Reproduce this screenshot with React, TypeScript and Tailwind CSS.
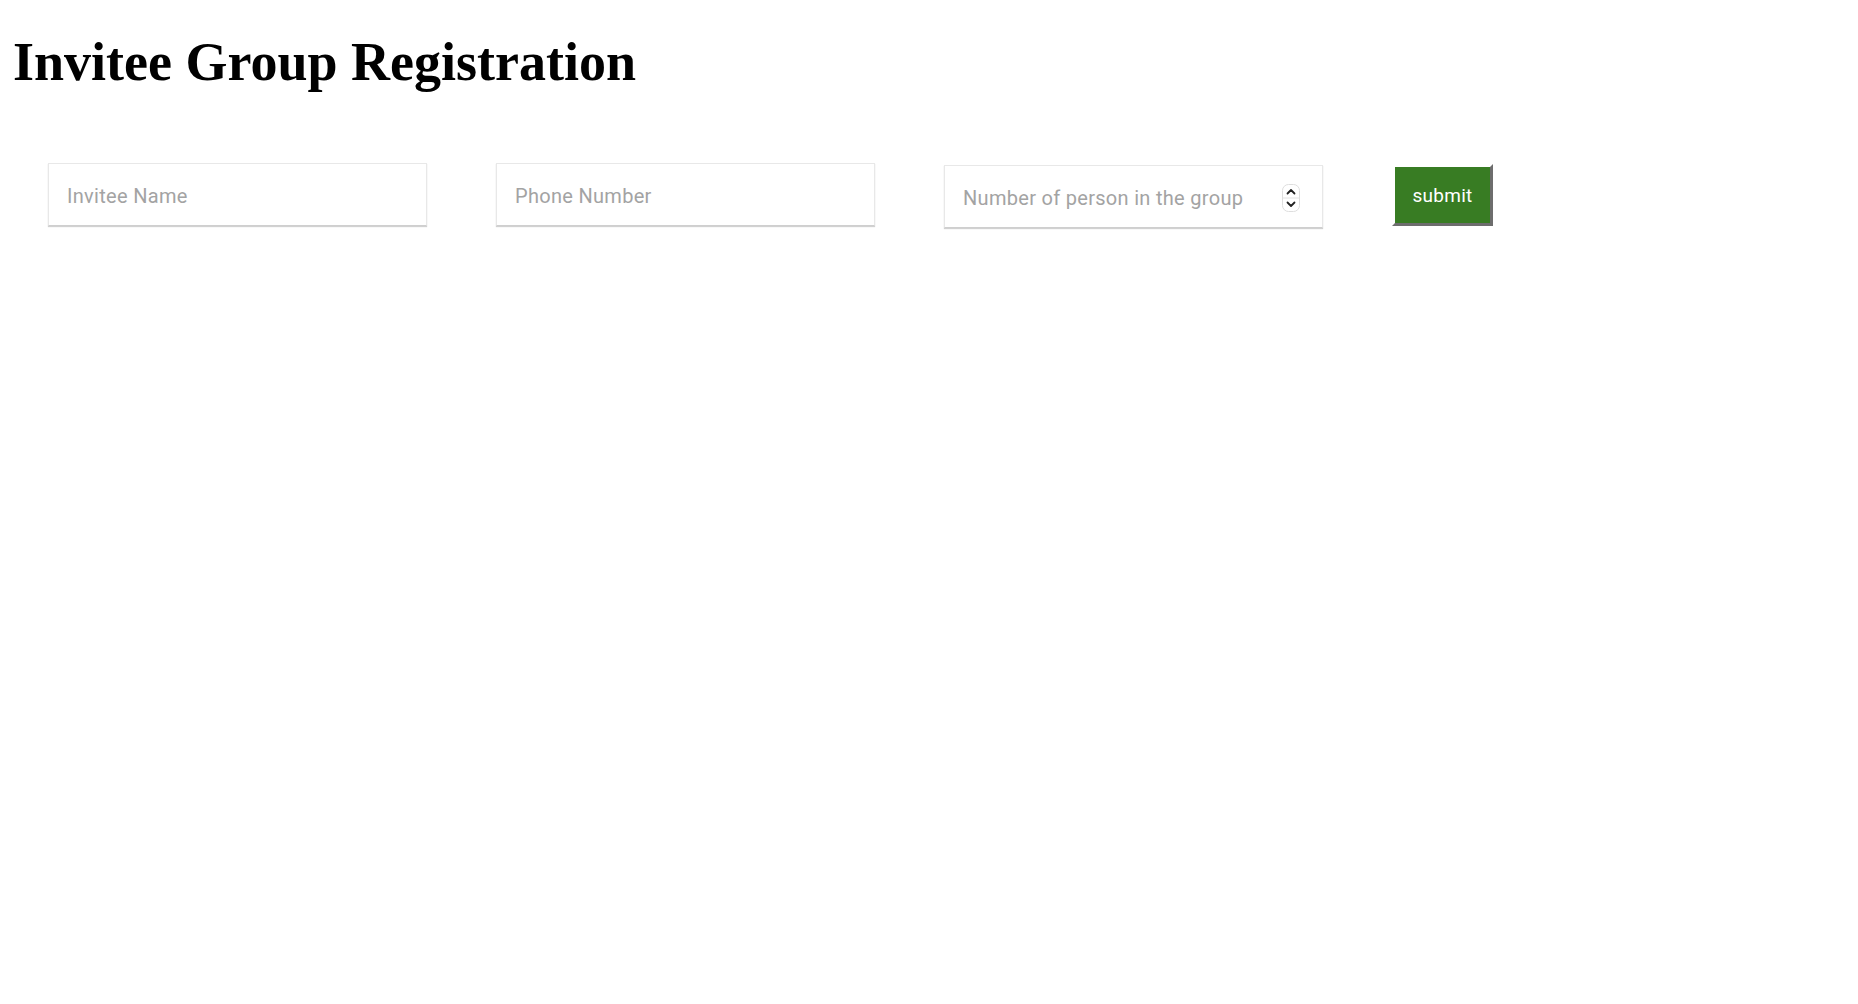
import { useState } from "react";

/** Flechas del campo numérico (dibujo del control nativo de macOS). */
function Spinner() {
  return (
    <svg
      className="pointer-events-none absolute right-[23px] top-[19px]"
      width="18"
      height="28"
      viewBox="0 0 18 28"
      fill="none"
    >
      <rect x="0.5" y="0.5" width="17" height="27" rx="6" fill="#fff" stroke="#dedede" />
      <line x1="1" y1="14" x2="17" y2="14" stroke="#e2e2e2" />
      <path d="M5.5 9.5 9 6l3.5 3.5" stroke="#222" strokeWidth="1.8" strokeLinecap="round" strokeLinejoin="round" />
      <path d="M5.5 18.5 9 22l3.5-3.5" stroke="#222" strokeWidth="1.8" strokeLinecap="round" strokeLinejoin="round" />
    </svg>
  );
}

const field =
  "h-[63px] w-[379px] border border-[#e8e8e8] border-b-[#cfcfcf] bg-white pl-[18px] pt-[2px] text-[20px] tracking-[0.3px] text-[#333] shadow-[0_1px_1px_rgba(0,0,0,0.18)] outline-none placeholder:text-[#a3a3a3] [font-family:Roboto,'Noto_Sans',sans-serif]";

export default function App() {
  const [name, setName] = useState("");
  const [phone, setPhone] = useState("");
  const [count, setCount] = useState("");

  return (
    <div className="min-h-screen bg-white">
      <h1 className="pl-[13px] pt-[32px] text-[54px] leading-[60px] font-bold text-black [font-family:'Liberation_Serif','Times_New_Roman',serif]">
        Invitee Group Registration
      </h1>

      <form
        className="mt-[71px] flex items-start gap-[69px] pl-[48px]"
        onSubmit={(e) => e.preventDefault()}
      >
        <input
          type="text"
          className={field}
          placeholder="Invitee Name"
          value={name}
          onChange={(e) => setName(e.target.value)}
        />
        <input
          type="text"
          className={field}
          placeholder="Phone Number"
          value={phone}
          onChange={(e) => setPhone(e.target.value)}
        />
        <div className="relative mt-[2px]">
          <input
            type="text"
            inputMode="numeric"
            className={field}
            placeholder="Number of person in the group"
            value={count}
            onChange={(e) => setCount(e.target.value.replace(/\D/g, ""))}
          />
          <Spinner />
        </div>
        <button
          type="submit"
          className="mt-[1px] h-[62px] w-[101px] border-[3px] border-t-white border-l-white border-r-[#6d6d6d] border-b-[#6d6d6d] bg-[#387c23] pt-[3px] text-[19px] tracking-[0.3px] text-white [font-family:Roboto,'Noto_Sans',sans-serif]"
        >
          submit
        </button>
      </form>
    </div>
  );
}
